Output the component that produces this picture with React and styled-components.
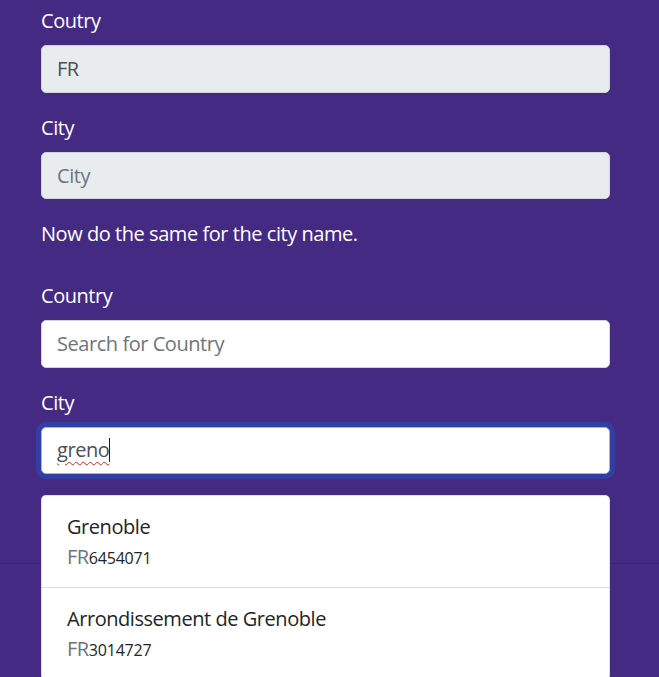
import React from "react";
import styled, { createGlobalStyle, css } from "styled-components";

const Global = createGlobalStyle`
  html, body { margin: 0; padding: 0; }
  body {
    background: #452a84;
    font-family: "Open Sans", "Noto Sans", sans-serif;
    font-size: 20px;
    line-height: 1.5;
    letter-spacing: -0.45px;
    color: #ffffff;
    overflow: hidden;
  }
  * { box-sizing: border-box; }
`;

const Page = styled.div`
  position: relative;
  width: 659px;
  height: 677px;
  overflow: hidden;
`;

const Container = styled.div`
  padding: 6px 49px 0 41px;
`;

const Group = styled.div`
  position: relative;
  margin-bottom: 20px;
`;

const Label = styled.label`
  display: block;
  margin-bottom: 9px;
  color: #fff;
`;

const Note = styled.p`
  margin: 0 0 32px;
  color: #fff;
`;

const fieldBase = css`
  display: block;
  width: 100%;
  height: 47.5px;
  padding: 7.5px 15px;
  font-family: inherit;
  font-size: 20px;
  line-height: 1.5;
  letter-spacing: -0.45px;
  color: #495057;
  border: 1px solid #ced4da;
  border-radius: 5px;
  outline: none;
  background: ${(p) => (p.readOnly ? "#e9ecef" : "#fff")};
  &::placeholder { color: #6c757d; opacity: 1; }
`;

const Input = styled.input`
  ${fieldBase}
`;

const FocusField = styled.div`
  ${fieldBase}
  background: #fff;
  border-color: #80bdff;
  box-shadow: 0 0 0 5px rgba(0, 123, 255, 0.25);
  display: flex;
  align-items: center;
`;

const Typed = styled.span`
  text-decoration: underline wavy #e02020;
  text-decoration-thickness: 1px;
  text-underline-offset: 4px;
`;

const Caret = styled.span`
  display: inline-block;
  width: 1px;
  height: 24px;
  background: #222;
`;

const Dropdown = styled.ul`
  position: absolute;
  left: 0;
  right: 0;
  top: 107px;
  margin: 0;
  padding: 0;
  list-style: none;
  background: #fff;
  border: 1px solid rgba(0, 0, 0, 0.125);
  border-radius: 5px;
  z-index: 5;
`;

const Item = styled.li`
  padding: 16px 25px 14px;
  color: #212529;
  & + & { border-top: 1px solid rgba(0, 0, 0, 0.125); }
`;

const ItemName = styled.div`
  line-height: 30px;
`;

const ItemMeta = styled.div`
  line-height: 29px;
`;

const Muted = styled.span`
  color: #6c757d;
`;

const Code = styled.small`
  font-size: 16px;
  letter-spacing: -0.2px;
  color: #212529;
`;

const Footer = styled.div`
  border-top: 1px solid rgba(0, 0, 0, 0.15);
  height: 120px;
  margin-top: 89px;
`;

const results = [
  { name: "Grenoble", country: "FR", id: "6454071" },
  { name: "Arrondissement de Grenoble", country: "FR", id: "3014727" },
];

export default function App() {
  return (
    <Page>
      <Global />
      <Container>
        <Group>
          <Label>Coutry</Label>
          <Input readOnly value="FR" />
        </Group>
        <Group>
          <Label>City</Label>
          <Input readOnly placeholder="City" />
        </Group>
        <Note>Now do the same for the city name.</Note>
        <Group>
          <Label>Country</Label>
          <Input placeholder="Search for Country" />
        </Group>
        <Group>
          <Label>City</Label>
          <FocusField>
            <Typed>greno</Typed>
            <Caret />
          </FocusField>
          <Dropdown>
            {results.map((r) => (
              <Item key={r.id}>
                <ItemName>{r.name}</ItemName>
                <ItemMeta>
                  <Muted>{r.country}</Muted>
                  <Code>{r.id}</Code>
                </ItemMeta>
              </Item>
            ))}
          </Dropdown>
        </Group>
      </Container>
      <Footer />
    </Page>
  );
}
